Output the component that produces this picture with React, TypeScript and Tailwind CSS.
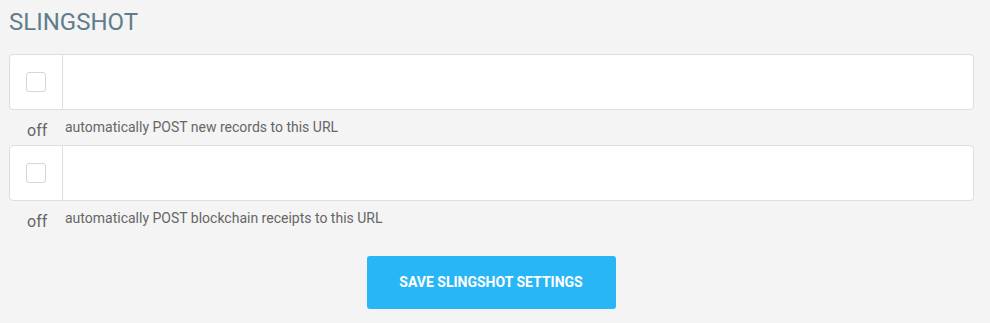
import React from "react";

function Row({ label }: { label: string }) {
  return (
    <div className="flex flex-col">
      <div className="flex h-[56px] rounded-[4px] border border-[#dedede] bg-white">
        <div className="flex w-[53px] items-center justify-center border-r border-[#dedede]">
          <div className="h-[20px] w-[20px] rounded-[3px] border border-[#d6d6d6] bg-white" />
        </div>
        <input className="flex-1 bg-transparent outline-none" />
      </div>
      <div className="mt-[7px] flex h-[20px] items-start">
        <span className="mt-[4px] w-[56px] pl-[18px] text-[16px] leading-[20px] text-[#666666]">off</span>
        <span className="text-[14px] leading-[20px] text-[#666666]">{label}</span>
      </div>
    </div>
  );
}

export default function App() {
  return (
    <div
      className="h-[323px] w-[990px] bg-[#f4f4f4] pl-[9px] pr-[16px]"
      style={{ fontFamily: "Roboto, 'Liberation Sans', sans-serif" }}
    >
      <h1 className="pt-[8px] text-[24px] leading-[28px] text-[#607d8b]">SLINGSHOT</h1>
      <div className="mt-[18px] flex flex-col gap-[8px]">
        <Row label="automatically POST new records to this URL" />
        <Row label="automatically POST blockchain receipts to this URL" />
      </div>
      <div className="mt-[28px] flex justify-center pr-[1px]">
        <button className="h-[53px] w-[249px] rounded-[3px] bg-[#29b6f6] text-[14px] font-bold text-white">
          SAVE SLINGSHOT SETTINGS
        </button>
      </div>
    </div>
  );
}
